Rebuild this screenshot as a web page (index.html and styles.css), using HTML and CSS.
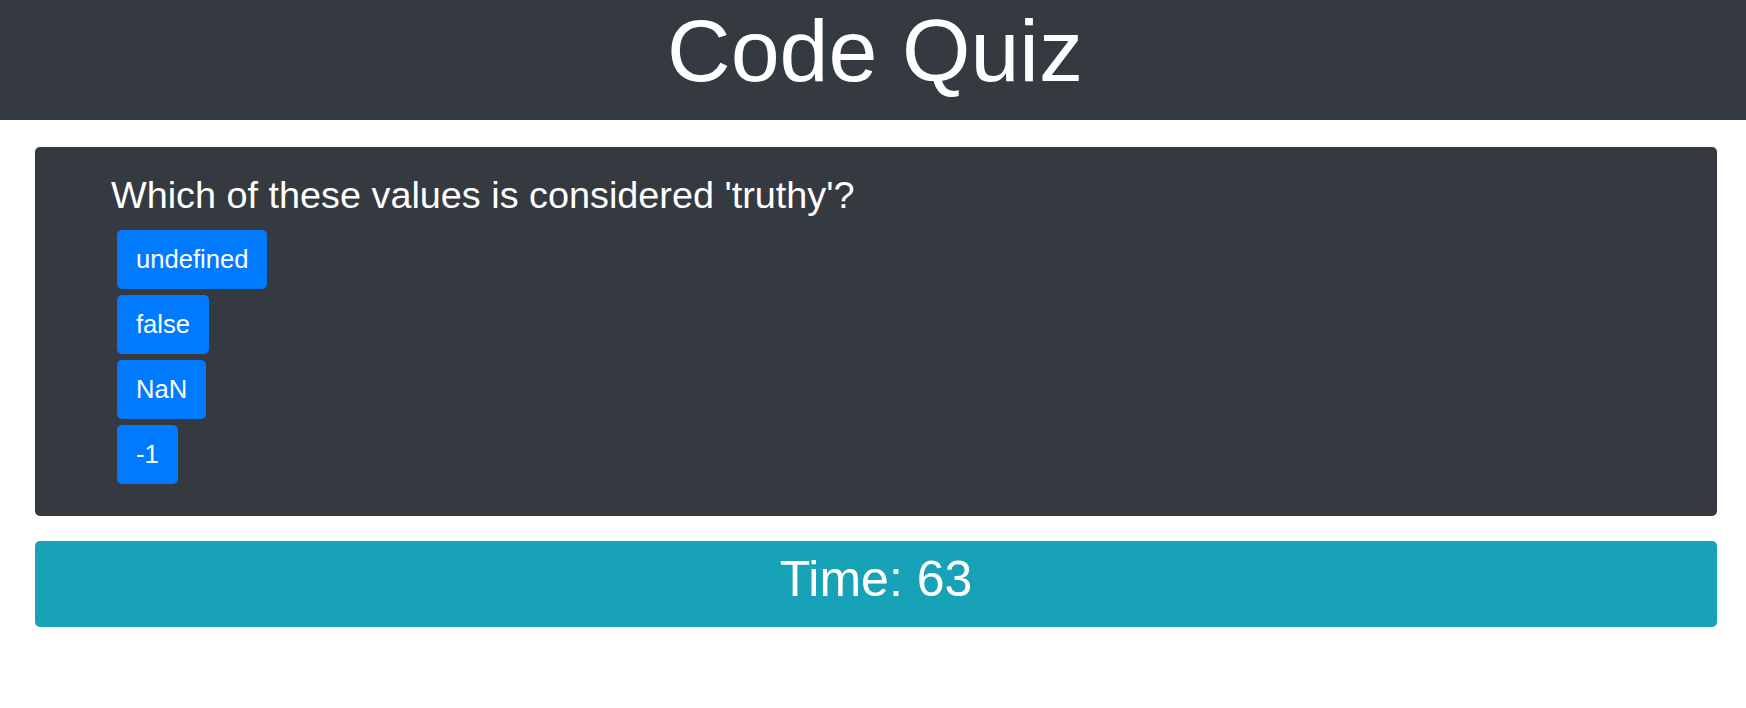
FILE: index.html
```html
<!DOCTYPE html>
<html lang="en">
<head>
<meta charset="utf-8">
<title>Code Quiz</title>
<link rel="stylesheet" href="styles.css">
</head>
<body>
<header class="site-header">
  <h1 class="site-title">Code Quiz</h1>
</header>
<main class="quiz">
  <section class="question-card">
    <h2 class="question">Which of these values is considered 'truthy'?</h2>
    <div class="answers">
      <button class="answer">undefined</button>
      <button class="answer">false</button>
      <button class="answer">NaN</button>
      <button class="answer">-1</button>
    </div>
  </section>
  <div class="timer">Time: 63</div>
</main>
</body>
</html>
```
FILE: styles.css
```css
html, body {
  margin: 0;
  padding: 0;
  background: #ffffff;
  font-family: "Liberation Sans", Arial, sans-serif;
  color: #ffffff;
}

.site-header {
  background: #343a40;
  height: 120px;
  box-sizing: border-box;
  text-align: center;
}

.site-title {
  margin: 0;
  font-size: 88px;
  font-weight: 400;
  line-height: 101px;
  padding-left: 4px;
}

.quiz {
  padding: 27px 29px 0 35px;
  display: flex;
  flex-direction: column;
  gap: 25.3px;
}

.question-card {
  background: #343a40;
  border-radius: 5px;
  padding: 26px 29px 32px 76px;
}

.question {
  margin: 0 0 11.5px;
  font-size: 37.8px;
  font-weight: 400;
  line-height: 45.6px;
}

.answers {
  display: flex;
  flex-direction: column;
  align-items: flex-start;
  gap: 6.2px;
  margin-left: 6px;
}

.answer {
  background: #007bff;
  color: #ffffff;
  border: none;
  border-radius: 5px;
  font-family: "Liberation Sans", Arial, sans-serif;
  font-size: 25.6px;
  line-height: 38.4px;
  padding: 10.2px 19px;
  margin: 0;
  cursor: pointer;
}

.timer {
  background: #17a2b8;
  border-radius: 5px;
  text-align: center;
  font-size: 50px;
  line-height: 60px;
  padding: 8px 0 18px;
}
```
